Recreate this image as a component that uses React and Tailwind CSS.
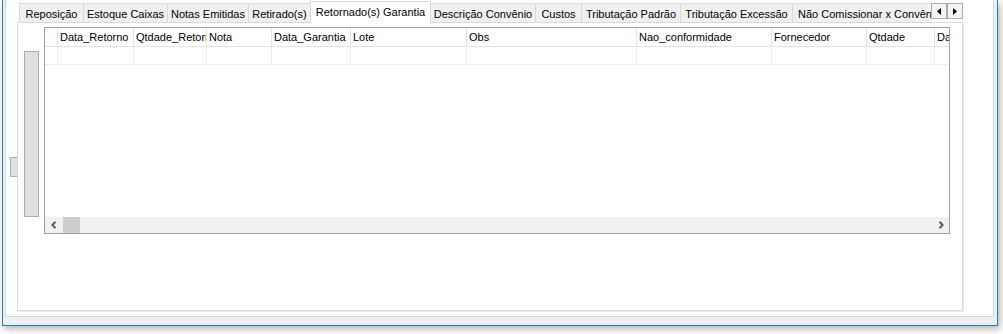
import React from "react";

const tabs = [
  { label: "Reposição", w: "w-[64px]" },
  { label: "Estoque Caixas", w: "w-[84px]" },
  { label: "Notas Emitidas", w: "w-[81px]" },
  { label: "Retirado(s)", w: "w-[62px]" },
  { label: "Retornado(s) Garantia", w: "w-[121px]", active: true },
  { label: "Descrição Convênio", w: "w-[104px]", noLeft: true },
  { label: "Custos", w: "w-[46px]" },
  { label: "Tributação Padrão", w: "w-[99px]" },
  { label: "Tributação Excessão", w: "w-[112px]" },
  { label: "Não Comissionar x Convênio", w: "w-[160px]", start: true },
];

const columns = [
  { label: "", w: "w-[13px]" },
  { label: "Data_Retorno", w: "w-[76px]" },
  { label: "Qtdade_Retorno", w: "w-[73px]" },
  { label: "Nota", w: "w-[65px]" },
  { label: "Data_Garantia", w: "w-[79px]" },
  { label: "Lote", w: "w-[116px]" },
  { label: "Obs", w: "w-[170px]" },
  { label: "Nao_conformidade", w: "w-[135px]" },
  { label: "Fornecedor", w: "w-[95px]" },
  { label: "Qtdade", w: "w-[68px]" },
  { label: "Data_Validade", w: "w-[60px]" },
];

function Tab({ tab }) {
  if (tab.active) {
    return (
      <div
        className={`${tab.w} h-[22px] -mb-[1px] relative z-10 flex-none flex justify-center pt-[4px] bg-white border-x border-t border-[#d9d9d9] whitespace-nowrap`}
      >
        {tab.label}
      </div>
    );
  }
  return (
    <div
      className={`${tab.w} h-[19px] flex-none flex ${
        tab.start ? "justify-start pl-[5px]" : "justify-center"
      } pt-[4px] bg-[#f0f0f0] border-t ${
        tab.noLeft ? "" : "border-l"
      } border-[#d9d9d9] whitespace-nowrap overflow-hidden`}
    >
      {tab.label}
    </div>
  );
}

function Chevron({ right }) {
  return (
    <svg width="6" height="8" viewBox="0 0 6 8">
      <path
        d={right ? "M1.5 0.8 L4.6 4 L1.5 7.2" : "M4.5 0.8 L1.4 4 L4.5 7.2"}
        fill="none"
        stroke="#606060"
        strokeWidth="2"
      />
    </svg>
  );
}

function Triangle({ right }) {
  return (
    <svg width="4" height="7" viewBox="0 0 4 7">
      <path d={right ? "M0 0 L4 3.5 L0 7 Z" : "M4 0 L0 3.5 L4 7 Z"} fill="#000" />
    </svg>
  );
}

export default function App() {
  return (
    <div className="w-[1003px] h-[334px] bg-white overflow-hidden font-['Liberation_Sans',Arial,sans-serif] text-[11px] leading-[13px] text-black">
      <div className="ml-[2px] w-[996px] h-[326px] border-x border-b border-[#1c7fd6] bg-[#f0f0f0] pl-[2px] shadow-[2px_3px_7px_rgba(0,0,0,0.3)]">
        <div className="w-[989px] h-[317px] bg-white border-x border-b border-[#d5d5d5] flex">
          {/* splitter grip */}
          <div className="w-[11px] flex-none">
            <div className="mt-[157px] ml-[4px] w-[7px] h-[20px] border-l border-y border-[#adadad] bg-[#e1e1e1]" />
          </div>

          {/* tab control */}
          <div className="w-[946px] flex-none mt-[1px] flex flex-col">
            <div className="h-[21px] flex">
              <div className="flex-1 min-w-0 overflow-x-clip flex items-end pl-[2px]">
                {tabs.map((t) => (
                  <Tab key={t.label} tab={t} />
                ))}
              </div>
              <div className="flex flex-none mt-[2px] self-start">
                <div className="w-[16px] h-[16px] border border-[#adadad] bg-[#f4f4f4] flex items-center justify-center">
                  <Triangle />
                </div>
                <div className="w-[16px] h-[16px] border border-[#adadad] bg-[#f4f4f4] flex items-center justify-center">
                  <Triangle right />
                </div>
              </div>
            </div>

            <div className="h-[289px] border border-[#d9d9d9] bg-white flex items-start shadow-[1px_1px_0_#ececec]">
              <div className="ml-[6px] mt-[28px] w-[15px] h-[166px] flex-none border border-[#adadad] bg-[#dfdfdf]" />

              {/* grid */}
              <div className="ml-[5px] mt-[4px] w-[906px] h-[207px] flex-none border border-[#a0a0a0] flex flex-col">
                <div className="h-[19px] flex border-b border-[#e3e3e3] overflow-hidden">
                  {columns.map((c, i) => (
                    <div
                      key={i}
                      className={`${c.w} flex-none h-full flex items-center pl-[2px] border-r border-[#e3e3e3] whitespace-nowrap overflow-hidden`}
                    >
                      {c.label}
                    </div>
                  ))}
                </div>
                <div className="h-[18px] flex border-b border-[#ececec] overflow-hidden">
                  {columns.map((c, i) => (
                    <div key={i} className={`${c.w} flex-none h-full border-r border-[#ececec]`} />
                  ))}
                </div>
                <div className="flex-1" />
                <div className="h-[16px] flex bg-[#f0f0f0]">
                  <div className="w-[18px] flex-none flex items-center justify-center">
                    <Chevron />
                  </div>
                  <div className="w-[17px] flex-none bg-[#cdcdcd]" />
                  <div className="flex-1" />
                  <div className="w-[17px] flex-none flex items-center justify-center">
                    <Chevron right />
                  </div>
                </div>
              </div>
            </div>
          </div>
        </div>
      </div>
    </div>
  );
}
